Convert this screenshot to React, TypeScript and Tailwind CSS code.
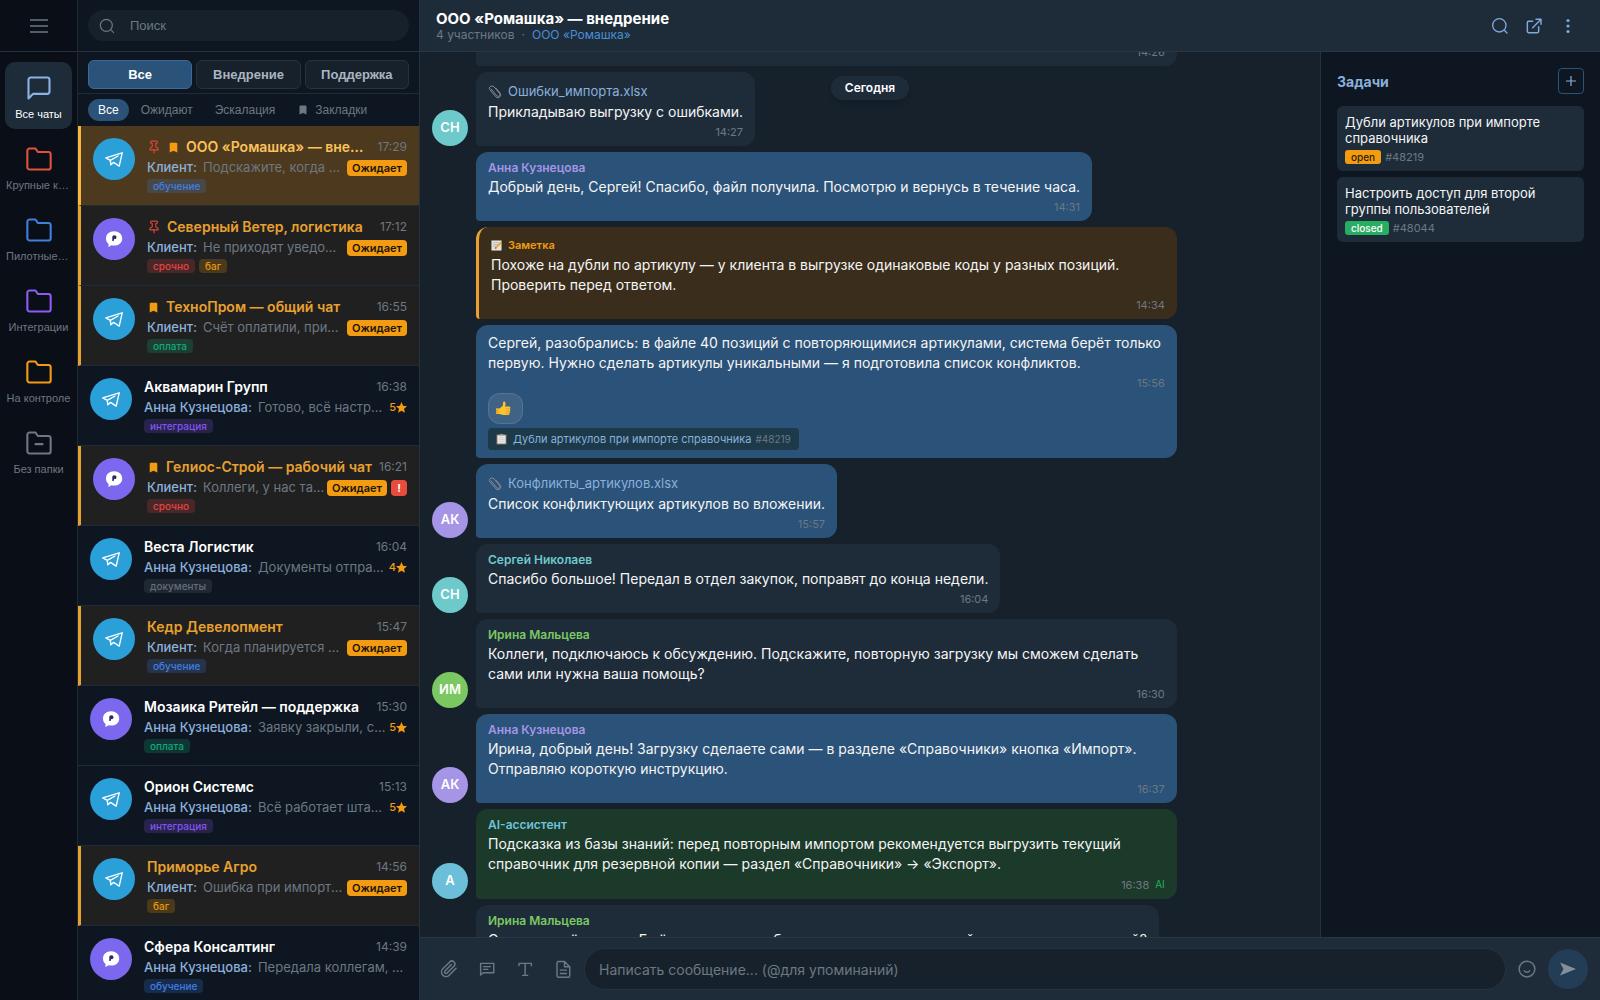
import React, { useLayoutEffect, useRef } from "react";

type SvgProps = { className?: string; children: React.ReactNode; stroke?: number };

function Line({ className, children, stroke = 2 }: SvgProps) {
  return (
    <svg
      className={className}
      viewBox="0 0 24 24"
      fill="none"
      stroke="currentColor"
      strokeWidth={stroke}
      strokeLinecap="round"
      strokeLinejoin="round"
      aria-hidden="true"
    >
      {children}
    </svg>
  );
}

const FOLDER = "M22 19a2 2 0 0 1-2 2H4a2 2 0 0 1-2-2V5a2 2 0 0 1 2-2h5l2 3h9a2 2 0 0 1 2 2z";

function Bookmark({ className }: { className: string }) {
  return (
    <svg viewBox="0 0 24 24" fill="currentColor" className={className} aria-hidden="true">
      <path d="M17 3H7a2 2 0 0 0-2 2v16l7-3 7 3V5a2 2 0 0 0-2-2z" />
    </svg>
  );
}

function Pin() {
  return (
    <Line className="size-[14px] text-[#d9453a]">
      <path d="M12 17v5" />
      <path d="M5 17h14v-1.800a2 2 0 0 0-1.100-1.800l-1.800-.9A2 2 0 0 1 15 10.800V6h1a2 2 0 0 0 0-4H8a2 2 0 0 0 0 4h1v4.800a2 2 0 0 1-1.100 1.700l-1.800.9A2 2 0 0 0 5 15.200z" />
    </Line>
  );
}

function Clip({ className }: { className: string }) {
  return (
    <Line className={className} stroke={2}>
      <path d="m21.440 11.050-9.190 9.190a6 6 0 0 1-8.490-8.490l9.190-9.190a4 4 0 0 1 5.660 5.660l-9.200 9.190a2 2 0 0 1-2.830-2.830l8.490-8.480" />
    </Line>
  );
}

function FileClip() {
  return (
    <svg viewBox="0 0 16 16" fill="none" className="size-[14px] shrink-0" stroke="#8b9197" strokeLinecap="round" aria-hidden="true">
      <path d="M3.500 4.500 10 12.200c2 2 4.800-.2 3.300-2.500L7 2.200C4.600-.2 0 2 2 5.200l7 8.300c2.800 2.800 7-.6 5-4L9.500 4" strokeWidth="1.100" />
    </svg>
  );
}

function NoteGlyph() {
  return (
    <svg viewBox="0 0 12 12" className="size-[11px]" aria-hidden="true">
      <path d="M.5.5h11v11H.5z" fill="#e4e3df" />
      <path d="M2 3h7M2 5h6M2 7h4" stroke="#a9a9a6" strokeWidth=".7" />
      <path d="m4.200 9.500.6-2L10.500 2l1.300 1.200-5.600 5.700z" fill="#e9a72d" />
      <path d="m4.200 9.500.6-2 1.400 1.400z" fill="#6b5b45" />
    </svg>
  );
}

function ClipboardGlyph() {
  return (
    <svg viewBox="0 0 12 13" className="h-3 w-[11px]" aria-hidden="true">
      <path d="M.5 1.500h11v11H.5z" fill="#8f6d4f" />
      <path d="M1.500 2.500h9v9h-9z" fill="#e6e8ea" />
      <path d="M3.500 2.800V1.600h1.300a1.300 1.300 0 0 1 2.400 0h1.300v1.200z" fill="#9aa1a8" />
      <path d="M3 5h6M3 7h6M3 9h6" stroke="#c3c8cc" strokeWidth=".7" />
    </svg>
  );
}

function ThumbGlyph() {
  return (
    <svg viewBox="0 0 16 16" className="size-4" aria-hidden="true">
      <path
        d="M1 7.500h3.500L7.800 4.800 8.100 1.300C8.300.2 10 .3 10.400 1.800c.3 1.300.1 2.500-.3 3.800h3.900c1.500 0 1.700 1.900.6 2.300 1.100.4 1 2-.1 2.300.8.5.6 1.900-.4 2.100.5.700.1 1.800-.9 1.800H8.300c-1.500 0-2.300-.9-3.800-1H1z"
        fill="#fcc52f"
      />
      <path d="M10.800 7.900h3.800M10.600 10.200h3.900M10.300 12.300h3.700" stroke="#dc9417" strokeWidth=".7" />
      <path d="M1 7.500h2.300v5.600H1z" fill="#eda51f" />
    </svg>
  );
}

function Star() {
  return (
    <svg viewBox="0 0 20 20" fill="currentColor" className="size-[11px]" aria-hidden="true">
      <path d="m10 0 2.900 6.900 7.100.600-5.400 4.800 1.700 7.200L10 15.700l-6.300 3.800 1.700-7.200L0 7.500l7.100-.6z" />
    </svg>
  );
}

function PlaneAvatar() {
  return (
    <span className="flex size-[42px] shrink-0 items-center justify-center rounded-full bg-[#2a9fd8]">
      <svg viewBox="0 0 18 15" fill="none" stroke="#fff" strokeWidth="1.400" strokeLinejoin="round" strokeLinecap="round" className="h-[15px] w-[18px]" aria-hidden="true">
        <path d="M17.200.8.800 5.800l4.500 2.500.500 4.500 2.800-2.400 5.600 3.800z" />
        <path d="M5.300 8.300 13 4" />
      </svg>
    </span>
  );
}

function BubbleAvatar() {
  return (
    <span className="flex size-[42px] shrink-0 items-center justify-center rounded-full bg-[#7b68ee]">
      <svg viewBox="0 0 18 18" className="size-[18px]" aria-hidden="true">
        <path d="M9.100 1.200c4.700 0 8.100 3 8.100 7.200s-3.400 7.200-8.100 7.200c-1 0-1.900-.1-2.700-.4-1 .9-2 1.500-3.300 1.700.5-1 .6-1.900.5-3C2 12.600 1 10.700 1 8.400c0-4.200 3.400-7.200 8.100-7.200z" fill="#fff" />
        <path d="M7.300 11V7.300C7.300 5.900 8 5.200 9.300 5.200s2.200.8 2.200 2-.8 1.900-2 1.900h-.3L8.600 11z" fill="#2f2766" />
      </svg>
    </span>
  );
}

const folders = [
  { label: "Крупные клиенты", color: "text-[#e0523f]" },
  { label: "Пилотные проекты", color: "text-[#3f7fe0]" },
  { label: "Интеграции", color: "text-[#8b5cf6]" },
  { label: "На контроле", color: "text-[#f39c12]" },
  { label: "Без папки", color: "text-[#6c7883]", minus: true },
];

function Rail() {
  return (
    <nav className="flex w-[78px] shrink-0 flex-col border-r border-[#1e2a36] bg-[#0a0e16]">
      <div className="flex h-[52px] items-center justify-center border-b border-[#253240]">
        <button aria-label="Меню" className="text-[#6c7883]">
          <svg viewBox="0 0 18 14" className="h-[14px] w-[18px]" stroke="currentColor" strokeWidth="1.500" aria-hidden="true">
            <path d="M0 1h18M0 7h18M0 13h18" />
          </svg>
        </button>
      </div>
      <div className="flex flex-col gap-1 px-[5px] pt-2.5 font-['Liberation_Sans',sans-serif] text-[11px] leading-4">
        <button className="flex h-[67px] w-full flex-col items-center gap-1 rounded-[10px] bg-[#1e2c3a] pt-3 text-white">
          <Line className="size-7 text-[#8ab4e8]" stroke={1.8}>
            <path d="M21 15a2 2 0 0 1-2 2H7l-4 4V5a2 2 0 0 1 2-2h14a2 2 0 0 1 2 2z" />
          </Line>
          <span>Все чаты</span>
        </button>
        {folders.map((f) => (
          <button key={f.label} className="flex h-[67px] w-full flex-col items-center gap-1 px-px pt-3 text-[#6c7883]">
            <span className={f.color}>
              <Line className="size-7" stroke={1.8}>
                <path d={FOLDER} />
                {f.minus && <path d="M9 13h6" />}
              </Line>
            </span>
            <span className="w-full truncate">{f.label}</span>
          </button>
        ))}
      </div>
    </nav>
  );
}

type Tag = "обучение" | "срочно" | "баг" | "оплата" | "интеграция" | "документы";

const tagStyle: Record<Tag, string> = {
  обучение: "bg-[#3b82f6]/20 text-[#3f7fe0]",
  срочно: "bg-[#ef4444]/20 text-[#e04545]",
  баг: "bg-[#f59e0b]/20 text-[#e8960f]",
  оплата: "bg-[#10b981]/20 text-[#14a878]",
  интеграция: "bg-[#8b5cf6]/20 text-[#8453ea]",
  документы: "bg-[#6b7280]/20 text-[#656d7a]",
};

type Chat = {
  name: string;
  time: string;
  from: string;
  text: string;
  tags: Tag[];
  telegram: boolean;
  waiting?: boolean;
  active?: boolean;
  pinned?: boolean;
  marked?: boolean;
  alert?: boolean;
  stars?: number;
};

const chats: Chat[] = [
  { name: "ООО «Ромашка» — внедрение", time: "17:29", from: "Клиент", text: "Подскажите, когда ждать обновление", tags: ["обучение"], telegram: true, waiting: true, active: true, pinned: true, marked: true },
  { name: "Северный Ветер, логистика", time: "17:12", from: "Клиент", text: "Не приходят уведомления", tags: ["срочно", "баг"], telegram: false, waiting: true, pinned: true },
  { name: "ТехноПром — общий чат", time: "16:55", from: "Клиент", text: "Счёт оплатили, пришлите акт", tags: ["оплата"], telegram: true, waiting: true, marked: true },
  { name: "Аквамарин Групп", time: "16:38", from: "Анна Кузнецова", text: "Готово, всё настроили", tags: ["интеграция"], telegram: true, stars: 5 },
  { name: "Гелиос-Строй — рабочий чат", time: "16:21", from: "Клиент", text: "Коллеги, у нас такая ситуация", tags: ["срочно"], telegram: false, waiting: true, marked: true, alert: true },
  { name: "Веста Логистик", time: "16:04", from: "Анна Кузнецова", text: "Документы отправила", tags: ["документы"], telegram: true, stars: 4 },
  { name: "Кедр Девелопмент", time: "15:47", from: "Клиент", text: "Когда планируется обучение", tags: ["обучение"], telegram: true, waiting: true },
  { name: "Мозаика Ритейл — поддержка", time: "15:30", from: "Анна Кузнецова", text: "Заявку закрыли, спасибо", tags: ["оплата"], telegram: false, stars: 5 },
  { name: "Орион Системс", time: "15:13", from: "Анна Кузнецова", text: "Всё работает штатно", tags: ["интеграция"], telegram: true, stars: 5 },
  { name: "Приморье Агро", time: "14:56", from: "Клиент", text: "Ошибка при импорте файла", tags: ["баг"], telegram: true, waiting: true },
  { name: "Сфера Консалтинг", time: "14:39", from: "Анна Кузнецова", text: "Передала коллегам, вернусь", tags: ["обучение"], telegram: false },
];

function ChatItem({ c }: { c: Chat }) {
  const bg = c.active ? "bg-[#4d3a1e]" : c.waiting ? "bg-[#212020]" : "";
  const edge = c.active ? "border-l-[3px] border-l-[#fbb53b]" : c.waiting ? "border-l-[3px] border-l-[#e8a02f]" : "";
  const title = c.active ? "text-[#fbc25c]" : c.waiting ? "text-[#e8a02f]" : "text-white";
  return (
    <li className={`flex h-20 gap-3 border-b border-b-[#1e2c3a] px-3 pt-3 ${bg} ${edge}`}>
      {c.telegram ? <PlaneAvatar /> : <BubbleAvatar />}
      <div className="min-w-0 flex-1">
        <div className="flex h-[18px] items-center">
          {c.pinned && <span className="mr-1.5 shrink-0"><Pin /></span>}
          {c.marked && <Bookmark className="mr-1.5 size-[13px] shrink-0 text-[#f39c12]" />}
          <span className={`min-w-0 flex-1 truncate text-sm font-semibold ${title}`}>{c.name}</span>
          <time className="ml-1.5 text-xs text-[#6c7883]">{c.time}</time>
        </div>
        <div className="mt-0.5 flex h-[19px] items-center">
          <span className="min-w-0 flex-1 truncate text-[13px] text-[#6c7883]">
            <span className="mr-1.5 font-medium text-[#8ab0dc]">{c.from}:</span>
            {c.text}
          </span>
          {c.waiting && (
            <span className="ml-0.5 rounded bg-[#f39c12] px-[5px] text-[11px] leading-4 font-semibold text-[#1b1508]">Ожидает</span>
          )}
          {c.alert && (
            <span className="ml-1 w-4 rounded bg-[#e74c3c] text-center text-[11px] leading-4 font-bold text-white">!</span>
          )}
          {c.stars && (
            <span className="ml-0.5 flex items-center text-[11px] font-medium text-[#f39c12]">
              {c.stars}
              <Star />
            </span>
          )}
        </div>
        <div className="mt-0.5 flex gap-1">
          {c.tags.map((t) => (
            <span key={t} className={`rounded px-1.5 text-[10px] leading-[14px] font-medium ${tagStyle[t]}`}>{t}</span>
          ))}
        </div>
      </div>
    </li>
  );
}

function ChatList() {
  const seg = "h-[29px] flex-1 rounded-md border text-[13px] font-bold";
  return (
    <aside className="flex w-[342px] shrink-0 flex-col border-r border-[#253240] bg-[#0e1621]">
      <div className="flex h-[52px] items-center border-b border-[#253240] px-2.5 font-['Liberation_Sans',sans-serif]">
        <label className="flex h-[31px] w-full items-center rounded-full bg-[#17212b] pl-[11px] text-[#6c7883]">
          <Line className="size-4" stroke={1.8}>
            <circle cx="11" cy="11" r="9" />
            <path d="m17.500 17.500 4.500 4.500" />
          </Line>
          <input type="search" placeholder="Поиск" aria-label="Поиск" className="ml-[15px] min-w-0 flex-1 bg-transparent text-[13px] outline-none placeholder:text-[#6c7883]" />
        </label>
      </div>
      <div className="flex h-[42px] items-end gap-1 border-b border-[#1e2c3a] px-2.5 pb-1 font-['Liberation_Sans',sans-serif]">
        <button className={`${seg} border-[#3a6a9c] bg-[#2b5278] text-white`}>Все</button>
        <button className={`${seg} border-[#253240] bg-[#17212b] text-[#aab4c0]`}>Внедрение</button>
        <button className={`${seg} border-[#253240] bg-[#17212b] text-[#aab4c0]`}>Поддержка</button>
      </div>
      <div className="flex h-8 items-center px-2.5 font-['Liberation_Sans',sans-serif] text-xs text-[#6c7883]">
        <button className="h-[22px] rounded-full bg-[#2b5278] px-2.5 text-white">Все</button>
        <button className="ml-0.5 px-2.5">Ожидают</button>
        <button className="ml-0.5 px-2.5">Эскалация</button>
        <button className="ml-0.5 flex items-center gap-1.5 px-2.5">
          <Bookmark className="size-3" />
          Закладки
        </button>
      </div>
      <ul className="min-h-0 flex-1 overflow-hidden">
        {chats.map((c) => <ChatItem key={c.name} c={c} />)}
      </ul>
    </aside>
  );
}

type Person = { name: string; initials: string; text: string; bg: string };

const sergey: Person = { name: "Сергей Николаев", initials: "СН", text: "text-[#6ec9cb]", bg: "bg-[#6ec9cb]" };
const anna: Person = { name: "Анна Кузнецова", initials: "АК", text: "text-[#a695e7]", bg: "bg-[#a695e7]" };
const irina: Person = { name: "Ирина Мальцева", initials: "ИМ", text: "text-[#7bc862]", bg: "bg-[#7bc862]" };
const bot: Person = { name: "AI-ассистент", initials: "A", text: "text-[#6ec2da]", bg: "bg-[#6bbfd8]" };

type Msg = {
  who: Person;
  kind: "in" | "out" | "note" | "ai";
  showName?: boolean;
  avatar?: boolean;
  file?: string;
  text: string;
  time: string;
  extras?: boolean;
};

const messages: Msg[] = [
  { who: sergey, kind: "in", showName: true, text: "Добрый день! При импорте справочника номенклатуры часть позиций не загружается, система сообщает об ошибке и пропускает строки.", time: "14:26" },
  { who: sergey, kind: "in", avatar: true, file: "Ошибки_импорта.xlsx", text: "Прикладываю выгрузку с ошибками.", time: "14:27" },
  { who: anna, kind: "out", showName: true, text: "Добрый день, Сергей! Спасибо, файл получила. Посмотрю и вернусь в течение часа.", time: "14:31" },
  { who: anna, kind: "note", text: "Похоже на дубли по артикулу — у клиента в выгрузке одинаковые коды у разных позиций. Проверить перед ответом.", time: "14:34" },
  { who: anna, kind: "out", text: "Сергей, разобрались: в файле 40 позиций с повторяющимися артикулами, система берёт только первую. Нужно сделать артикулы уникальными — я подготовила список конфликтов.", time: "15:56", extras: true },
  { who: anna, kind: "out", avatar: true, file: "Конфликты_артикулов.xlsx", text: "Список конфликтующих артикулов во вложении.", time: "15:57" },
  { who: sergey, kind: "in", showName: true, avatar: true, text: "Спасибо большое! Передал в отдел закупок, поправят до конца недели.", time: "16:04" },
  { who: irina, kind: "in", showName: true, avatar: true, text: "Коллеги, подключаюсь к обсуждению. Подскажите, повторную загрузку мы сможем сделать сами или нужна ваша помощь?", time: "16:30" },
  { who: anna, kind: "out", showName: true, avatar: true, text: "Ирина, добрый день! Загрузку сделаете сами — в разделе «Справочники» кнопка «Импорт». Отправляю короткую инструкцию.", time: "16:37" },
  { who: bot, kind: "ai", showName: true, avatar: true, text: "Подсказка из базы знаний: перед повторным импортом рекомендуется выгрузить текущий справочник для резервной копии — раздел «Справочники» → «Экспорт».", time: "16:38" },
  { who: irina, kind: "in", showName: true, avatar: true, text: "Отлично, всё поняла. Ещё вопрос: если обновить остатки из архивной выгрузке, нужен новый?", time: "16:45" },
];

const bubbleStyle = {
  in: "bg-[#1e2c3a]",
  out: "bg-[#2b5278]",
  note: "border-l-[3px] border-[#e8a02f] bg-[#3a2d1b]",
  ai: "bg-[#1c3a2a]",
};

function Message({ m }: { m: Msg }) {
  return (
    <div className="flex items-end gap-2">
      {m.avatar ? (
        <span className={`flex size-9 shrink-0 items-center justify-center rounded-full text-[13px] font-semibold text-white ${m.who.bg}`}>
          {m.who.initials}
        </span>
      ) : (
        <span className="w-9 shrink-0" />
      )}
      <div className={`max-w-[80%] rounded-xl rounded-bl px-3 py-2 ${bubbleStyle[m.kind]}`}>
        {m.showName && <div className={`mb-px text-xs leading-4 font-semibold ${m.who.text}`}>{m.who.name}</div>}
        {m.kind === "note" && (
          <div className="flex items-center gap-1.5 text-[11px] leading-5 font-semibold text-[#f39c12]">
            <NoteGlyph />
            Заметка
          </div>
        )}
        {m.file && (
          <a href="#file" className="flex h-[22px] items-center gap-1.5 pt-0.5 text-[13px] text-[#8ab0dc]">
            <FileClip />
            {m.file}
          </a>
        )}
        <p className="text-sm leading-5 text-[#f5f5f5]">{m.text}</p>
        <div className="mt-1 flex items-center justify-end gap-1.5 text-[11px] leading-3 text-[#6c7883]">
          <time>{m.time}</time>
          {m.kind === "ai" && <span className="text-[10px] leading-[13px] text-[#27ae60]">AI</span>}
        </div>
        {m.extras && (
          <>
            <button aria-label="Нравится" className="mt-1 flex h-[31px] w-[35px] items-center rounded-xl border border-white/10 bg-white/10 pl-1.5">
              <ThumbGlyph />
            </button>
            <a href="#task" className="mt-1 flex h-[22px] w-fit items-center rounded bg-[#1c3a4a] px-2 text-[11px] text-[#8ab0dc]">
              <ClipboardGlyph />
              <span className="ml-1.5">Дубли артикулов при импорте справочника</span>
              <span className="ml-1 text-[10px] text-[#6c7883]">#48219</span>
            </a>
          </>
        )}
      </div>
    </div>
  );
}

function Conversation() {
  const scroller = useRef<HTMLDivElement>(null);
  useLayoutEffect(() => {
    if (scroller.current) scroller.current.scrollTop = 87;
  }, []);
  return (
    <section className="relative min-w-0 flex-1 bg-[#17212b]">
      <div ref={scroller} className="flex h-full flex-col gap-1.5 overflow-y-auto p-3 [scrollbar-width:none]">
        {messages.map((m) => <Message key={m.time} m={m} />)}
      </div>
      <div className="absolute inset-x-0 top-6 flex justify-center">
        <span className="rounded-full bg-[#1e2c3a] px-3.5 text-xs leading-6 font-semibold text-white shadow-md">Сегодня</span>
      </div>
    </section>
  );
}

const tasks = [
  { title: "Дубли артикулов при импорте справочника", status: "open", id: "#48219", style: "bg-[#f39c12] text-[#2a1c05]" },
  { title: "Настроить доступ для второй группы пользователей", status: "closed", id: "#48044", style: "bg-[#27ae60] text-white" },
];

function Tasks() {
  return (
    <aside className="w-[280px] shrink-0 border-l border-[#253240] bg-[#0e1621] px-4 pt-4">
      <div className="flex items-center justify-between">
        <h2 className="pt-0.5 text-sm font-bold text-[#8ab0dc]">Задачи</h2>
        <button aria-label="Добавить задачу" className="flex size-[26px] items-center justify-center rounded border border-[#2b5278] text-[#8ab0dc]">
          <svg viewBox="0 0 10 10" className="size-2.5" stroke="currentColor" strokeWidth="1.200" aria-hidden="true">
            <path d="M5 0v10M0 5h10" />
          </svg>
        </button>
      </div>
      <ul className="mt-3 flex flex-col gap-1.5">
        {tasks.map((t) => (
          <li key={t.id} className="rounded-md bg-[#1e2c3a] px-2 pt-2 pb-[7px]">
            <p className="text-[13px] leading-4 text-[#f5f5f5]">{t.title}</p>
            <div className="mt-1 flex items-center gap-1">
              <span className={`rounded-[3px] px-1.5 text-[10px] leading-[14px] font-medium ${t.style}`}>{t.status}</span>
              <span className="text-[11px] leading-[14px] text-[#6c7883]">{t.id}</span>
            </div>
          </li>
        ))}
      </ul>
    </aside>
  );
}

function Header() {
  return (
    <header className="flex h-[52px] shrink-0 items-center justify-between border-b border-[#2a3744] bg-[#1e2c3a] pr-6 pl-4">
      <div>
        <h1 className="text-[15px] leading-[18px] font-bold text-white">ООО «Ромашка» — внедрение</h1>
        <p className="text-xs leading-[14px] text-[#6c7883]">
          4 участников<span className="mx-[7px]">·</span>
          <a href="#client" className="text-[#4a8fd4]">ООО «Ромашка»</a>
        </p>
      </div>
      <div className="flex items-center gap-[18px] text-[#7fa9dc]">
        <button aria-label="Поиск по чату">
          <Line className="size-4" stroke={2}>
            <circle cx="11" cy="11" r="10" />
            <path d="m18.500 18.500 4 4" />
          </Line>
        </button>
        <button aria-label="Открыть в новом окне">
          <Line className="size-4" stroke={2.2}>
            <path d="M10 5H4a2 2 0 0 0-2 2v13a2 2 0 0 0 2 2h13a2 2 0 0 0 2-2v-7M15 2h7.500v7.500M22.500 2 10 14.500" />
          </Line>
        </button>
        <button aria-label="Ещё">
          <svg viewBox="0 0 16 16" fill="currentColor" className="size-4" aria-hidden="true">
            <circle cx="8" cy="2.500" r="1.600" />
            <circle cx="8" cy="8" r="1.600" />
            <circle cx="8" cy="13.500" r="1.600" />
          </svg>
        </button>
      </div>
    </header>
  );
}

function Composer() {
  return (
    <form className="flex h-[63px] shrink-0 items-center border-t border-[#2a3744] bg-[#1e2c3a] pr-3 pl-5 text-[#6c7883]" onSubmit={(e) => e.preventDefault()}>
      <div className="flex items-center gap-5">
        <button type="button" aria-label="Прикрепить файл"><Clip className="size-[18px]" /></button>
        <button type="button" aria-label="Шаблоны">
          <Line className="size-[18px]" stroke={1.9}>
            <path d="M3.500 4.500h17.500v12.500H7l-3.500 3zM7.500 8.800h9M7.500 12.500h5.500" />
          </Line>
        </button>
        <button type="button" aria-label="Форматирование">
          <Line className="size-[18px]" stroke={1.9}>
            <path d="M4 7.500V4.500h16.500v3M12.200 4.500V20.500M9 20.500h6.500" />
          </Line>
        </button>
        <button type="button" aria-label="База знаний">
          <Line className="size-[18px]" stroke={1.9}>
            <path d="M14 2H6a2 2 0 0 0-2 2v17a2 2 0 0 0 2 2h13a2 2 0 0 0 2-2V9zM14 2v7h7M16.500 13.500h-8M16.500 18h-8" />
          </Line>
        </button>
      </div>
      <input
        aria-label="Сообщение"
        placeholder="Написать сообщение... (@для упоминаний)"
        className="ml-3 h-[42px] min-w-0 flex-1 rounded-full border border-[#253240] bg-[#17212b] px-3.5 text-sm text-white outline-none placeholder:text-[#6c7883]"
      />
      <button type="button" aria-label="Эмодзи" className="ml-3">
        <Line className="size-[18px]" stroke={2}>
          <circle cx="12" cy="12" r="10.500" />
          <path d="M8.500 14.500s1.200 1.700 3.500 1.700 3.500-1.700 3.500-1.700" />
        </Line>
      </button>
      <button type="submit" aria-label="Отправить" className="ml-3 flex size-10 items-center justify-center rounded-full bg-[#233d57] text-[#83909c]">
        <svg viewBox="0 0 18 16" fill="currentColor" className="h-4 w-[18px]" aria-hidden="true">
          <path d="M1 1.500 17 8 1 14.500l3.500-6.500z" />
        </svg>
      </button>
    </form>
  );
}

export default function App() {
  return (
    <div className="flex h-screen overflow-hidden bg-[#0e1621] font-['Inter',sans-serif]">
      <Rail />
      <ChatList />
      <main className="flex min-w-0 flex-1 flex-col">
        <Header />
        <div className="flex min-h-0 flex-1">
          <Conversation />
          <Tasks />
        </div>
        <Composer />
      </main>
    </div>
  );
}
